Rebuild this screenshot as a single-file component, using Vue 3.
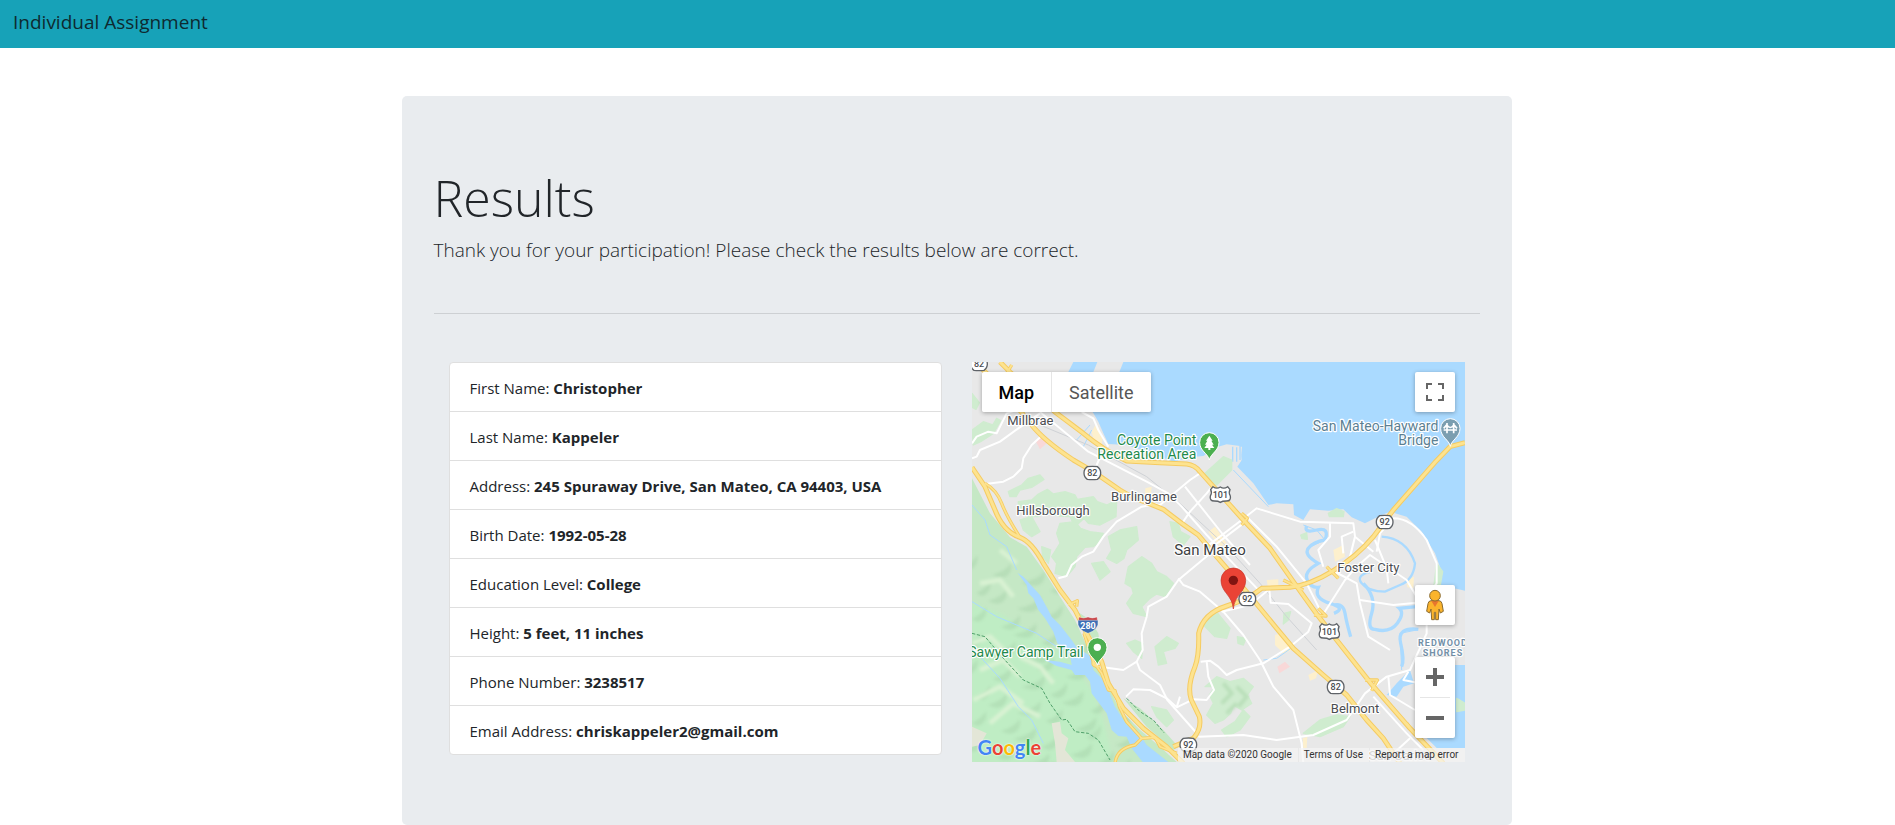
<script setup>
const details = [
  { label: 'First Name', value: 'Christopher' },
  { label: 'Last Name', value: 'Kappeler' },
  { label: 'Address', value: '245 Spuraway Drive, San Mateo, CA 94403, USA' },
  { label: 'Birth Date', value: '1992-05-28' },
  { label: 'Education Level', value: 'College' },
  { label: 'Height', value: '5 feet, 11 inches' },
  { label: 'Phone Number', value: '3238517' },
  { label: 'Email Address', value: 'chriskappeler2@gmail.com' },
]

const parks = [
  'M36 130L58 158L48 178L36 172Z',
  'M36 240L70 215L98 225L110 205L122 212L100 250L62 275L40 285Z',
  'M145 425L185 405L205 385L240 375L252 388L215 412L180 420L168 440L150 440Z',
  'M175 455L215 450L235 432L262 418L280 432L315 425L345 435L352 448L400 440L412 455L440 465L470 450L468 500L420 525L385 520L372 505L345 530L330 500L295 498L260 485L235 500L205 500L198 480L175 480Z',
  'M180 510L215 500L240 545L215 560L190 540Z',
  'M300 520L345 515L362 535L390 545L430 550L418 575L400 590L375 592L350 620L345 650L320 680L285 670L290 640L275 620L300 580L290 550Z',
  'M245 590L272 600L265 640L248 620Z',
  'M445 560L480 540L530 530L535 570L500 600L492 625L470 640L440 625L455 600Z',
  'M395 640L430 635L450 665L420 690Z',
  'M505 650L545 620L575 640L590 665L620 680L640 700L615 740L590 732L570 745L545 770L560 800L520 790L500 760L520 730L515 712L495 700Z',
  'M630 515L655 520L662 545L690 560L670 585L640 560Z',
  'M735 370L790 320L815 330L815 360L770 405L750 390Z',
  'M725 820L765 780L810 835L800 865L765 860Z',
  'M585 890L620 860L655 880L645 895L610 905L620 940L595 945Z',
  'M500 880L525 870L548 880L545 925L520 905Z',
  'M735 1010L770 980L810 995L850 985L880 1010L862 1035L875 1060L845 1080L820 1065L812 1090L790 1110L765 1120L740 1095L760 1060L748 1035L765 1010Z',
  'M785 1140L825 1115L850 1080L870 1100L840 1140L800 1160Z',
  'M1030 1150L1080 1110L1130 1095L1170 1100L1150 1130L1080 1160Z',
  'M1105 490L1130 476L1152 485L1150 500L1108 500Z',
  'M1022 555L1040 548L1042 568L1026 566Z',
  'M1430 640L1448 665L1440 710L1422 705Z',
  'M1490 1045L1515 1060L1515 1080L1490 1085Z',
  'M972 790L992 785L985 810L970 822Z',
  'M832 860L858 865L850 885L834 880Z',
  'M575 1070L620 1080L640 1110L620 1130L590 1100Z',
]

const builtUp = [
  'M745 545L765 530L800 580L780 590Z',
  'M945 855L965 850L995 900L970 910L945 885Z',
  'M1120 600L1150 585L1155 620L1125 635Z',
  'M920 690L955 688L955 720L925 720Z',
  'M1045 975L1075 960L1068 985L1050 992Z',
  'M1340 690L1362 680L1360 715L1342 712Z',
  'M1028 1165L1042 1160L1040 1194L1030 1194Z',
  'M556 415L575 410L572 440L555 435Z',
  'M395 245L410 220L428 262L425 285L400 265Z',
]

const majorRoads = [
  'M120 36L150 66L285 186L370 250Q430 300 500 333L600 338L680 342Q705 345 720 365L850 510L930 595L1000 695L1070 792L1130 870L1235 1003L1350 1135L1450 1240',
  'M60 50L130 120L215 225Q250 270 340 330L400 365L480 420Q520 445 560 458L610 478L665 520L715 555L770 620L820 678L880 750L950 835L1000 895L1090 975L1160 1035L1220 1110L1270 1165L1320 1240',
  'M1515 278L1470 290L1425 337L1300 480L1240 560Q1190 620 1120 662Q1050 705 990 712L905 715Q870 745 800 768Q730 790 716 850Q718 915 705 950Q680 1010 694 1050L718 1100Q726 1135 700 1165L640 1190',
  'M36 352L75 410L105 480Q130 545 180 562Q215 575 250 640L300 720L345 780L380 850L425 935L445 1000L490 1075L550 1135L620 1190L670 1240',
]

const rampRoads = [
  'M75 400Q110 420 125 460T180 562',
  'M372 850L400 935L425 970L445 1020L465 1022L478 1070L500 1115L545 1165L525 1185Q470 1195 465 1240',
  'M545 1165L585 1162L600 1190L650 1210',
  'M325 765L352 752L350 770',
  'M400 935Q395 950 420 950',
  'M140 70L155 45',
  'M845 490L862 505L845 525',
  'M1062 795L1098 798L1075 775',
  'M1215 990L1252 990L1235 1022',
  'M970 690L1030 720',
  'M1100 650L1135 685',
  'M1340 1120L1362 1150',
]

const minorRoads = [
  'M36 280L50 260L85 245L110 250L140 190L185 175',
  'M36 325L50 320L60 300L120 275L175 235L240 190',
  'M76 402L130 395L160 380L185 355L190 325L215 285L242 260',
  'M240 186L300 235L385 305L560 395L625 430L665 470L740 555L800 620L900 725',
  'M365 186L400 205L415 240L445 290',
  'M410 345L425 310L450 300',
  'M295 685L320 678L335 645L365 620L400 605L430 560L470 515L545 470L590 462',
  'M550 460L600 465L690 390L720 370',
  'M665 522L690 485L740 430L752 415',
  'M675 410L790 555L870 645',
  'M740 590L845 510L890 475L1020 515L1180 520L1185 560L1240 605',
  'M765 585L850 520',
  'M860 500L950 590L1040 700L1085 790',
  'M745 615L655 690L620 740L565 770L560 800L545 850L548 900L530 935L490 960L430 952',
  'M655 685L670 705L720 725L790 785L850 855L900 930L940 1010L1000 1080L1025 1180L1030 1240',
  'M785 785L870 765L925 720',
  'M928 720L932 758L985 762L1055 820L1045 845L990 890L910 940L830 960L800 975L775 950L750 932L722 935',
  'M740 935L745 980L762 1020L740 1050L700 1048L650 1072L620 1045L570 1020L520 1018L498 1040',
  'M530 935L540 960L600 1005L622 1050L715 1155',
  'M650 1072L660 1040',
  'M715 1160L850 1155L950 1170L1060 1155L1160 1110L1215 1030L1280 980L1350 960L1400 850L1400 820',
  'M1085 800L1155 690L1190 650L1230 615L1340 690L1370 740',
  'M1115 660L1190 700L1200 760L1225 860L1290 900',
  'M1090 650L1075 600L1110 560L1110 520',
  'M1150 610L1145 560L1180 545',
  'M1185 560L1170 620',
  'M1250 605L1260 550L1300 505Q1355 505 1400 570L1430 640L1430 700L1400 740',
  'M1200 750L1300 765L1370 758',
  'M1245 570L1280 655L1285 700',
  'M1285 980L1290 1035L1365 1080',
  'M1240 1040L1340 1150L1390 1200',
  'M1345 965L1330 990L1380 1000',
  'M1290 1220L1350 1165',
]

const creeks = [
  'M36 465L75 510L90 555L140 590L170 660',
  'M36 755L110 800L170 825L230 850L290 890',
  'M60 920L120 985L175 1070L215 1110L250 1180',
  'M820 360L925 470',
  'M910 930L950 925L1000 890',
  'M1030 525L1070 540L1095 570L1040 595',
  'M1370 840L1320 850L1325 960',
  'M1290 1025L1350 975',
  'M350 270L390 225M370 290L395 240',
]

const places = [
  { name: 'Millbrae', x: 211, y: 224 },
  { name: 'Burlingame', x: 552, y: 452 },
  { name: 'Hillsborough', x: 279, y: 494 },
  { name: 'Foster City', x: 1225, y: 665 },
  { name: 'Belmont', x: 1185, y: 1088 },
]

const stateRoutes = [
  { no: '82', x: 57, y: 42 },
  { no: '82', x: 397, y: 369 },
  { no: '92', x: 1274, y: 516 },
  { no: '92', x: 862, y: 747 },
  { no: '82', x: 1127, y: 1011 },
  { no: '92', x: 685, y: 1184 },
]

const usRoutes = [
  { no: '101', x: 781, y: 434 },
  { no: '101', x: 1108, y: 845 },
]

const ridges = []
for (let row = 0; row < 8; row++) {
  for (let col = 0; col < 7; col++) {
    const x = 10 + col * 74 + ((row * 3 + col) % 4) * 13
    const y = 650 + row * 78 + col * 24
    const reach = 24 + ((row * 5 + col * 7) % 5) * 7
    ridges.push(`M${x} ${y}q${reach} -8 ${reach + 18} -34q4 20 -8 34q-16 18 ${-reach - 10} 0z`)
  }
}
</script>

<template>
  <header class="navbar">
    <a class="brand" href="#">Individual Assignment</a>
  </header>

  <main class="container">
    <section class="jumbotron">
      <h1>Results</h1>
      <p class="lead">Thank you for your participation! Please check the results below are correct.</p>
      <hr />
      <div class="row">
        <ul class="details">
          <li v-for="item in details" :key="item.label">
            {{ item.label }}: <strong>{{ item.value }}</strong>
          </li>
        </ul>

        <div class="map">
          <svg class="tiles" viewBox="36 36 1479 1200" preserveAspectRatio="xMidYMid slice" role="img" aria-label="Map of San Mateo">
            <defs>
              <clipPath id="hills">
                <path d="M36 385L90 490L150 562L200 590L250 660L300 740L345 810L400 930L440 1000L480 1080L540 1140L600 1190L650 1236H36Z" />
              </clipPath>
              <filter id="soft"><feGaussianBlur stdDeviation="5" /></filter>
            </defs>

            <rect x="-400" y="-400" width="2400" height="2100" fill="#e8e8e8" />
            <path class="water" d="M340 36L325 66L400 66L412 36ZM490 36L478 66L400 160L398 186L415 215L430 250L445 282L500 285L560 305L640 335L690 322L730 318L775 290L800 283L840 288L845 330L832 350L880 400L925 465L950 460L1000 463L1002 495L1030 510L1050 478L1105 482L1150 478L1175 502L1215 520L1260 497L1290 485L1340 500L1385 545L1425 610L1445 665L1440 705L1515 722L2000 722V-400H490Z" />
            <path class="water" d="M1515 945L1480 945L1440 1000L1400 1164L1430 1194L1515 1194L2000 1194V945Z" />
            <path fill="#aadaff" d="M1280 1035L1310 1000L1350 960L1362 1000L1330 1010L1310 1040Z" />
            <path fill="#e8e8e8" d="M815 290L822 335H842L846 290Z" />
            <path class="pier" d="M818 290V335M830 292V335M840 288V330" />

            <path fill="#c5e8c5" d="M36 385L90 490L150 562L200 590L250 660L300 740L345 810L400 930L440 1000L480 1080L540 1140L600 1190L650 1236H36Z" />
            <path fill="#c5e8c5" d="M345 780L390 810L415 850L425 920L400 870ZM490 1045L540 1075L610 1140L655 1190L640 1200L560 1130Z" />
            <g clip-path="url(#hills)">
              <path fill="#bfedc4" filter="url(#soft)" d="M36 760L120 790L220 850L330 930L400 1030L430 1110L460 1236H36Z" />
              <path v-for="d in ridges" :key="d" class="ridge" :d="d" filter="url(#soft)" />
              <path class="ridge-light" filter="url(#soft)" d="M36 880L90 860L130 900M60 960L130 930L180 980M40 1050L120 1010L190 1060M90 1120L160 1060L240 1100M180 920L240 950L280 1000M60 700L120 690L160 740M120 600L170 640" />
              <path fill="#e3e6d7" d="M275 1120L300 1115L305 1150L325 1165L315 1200L345 1236H290L285 1180Z" />
              <path fill="#e3e6d7" d="M36 1130L80 1150L60 1185L36 1190Z" />
            </g>
            <path v-for="d in parks" :key="d" class="park" :d="d" />
            <path class="park-relief" filter="url(#soft)" d="M790 1000L815 1030L785 1060M830 1010L860 1040L835 1070M800 1090L830 1060" />
            <path v-for="d in builtUp" :key="d" class="built" :d="d" />
            <path fill="#f9d8d8" d="M228 275L245 262L260 280L240 298ZM952 950L975 935L990 950L958 970Z" />

            <path class="creek wide" d="M1040 528Q1030 550 1070 540T1095 570Q1060 575 1045 595T1075 640Q1030 665 1042 690T1075 712Q1060 745 1110 760T1122 790" />
            <path class="creek wide" d="M1125 765Q1150 760 1155 790T1172 860" />
            <path class="creek lagoon" d="M1265 560Q1340 565 1365 640Q1360 690 1320 705L1275 725Q1225 725 1205 700T1235 665" />
            <path class="creek wide" d="M1210 700Q1250 740 1235 790T1245 838Q1290 850 1312 820T1318 775L1370 770" />
            <path class="creek wide" d="M1375 838Q1310 830 1322 880T1325 950" />
            <path v-for="d in creeks" :key="d" class="creek" :d="d" />
            <path fill="#aadaff" d="M172 668L190 680L240 735L262 775L275 800L300 825L335 870L352 895L395 920L400 960L425 985L445 1020L465 1070L500 1125L530 1140L560 1185L625 1236H548L515 1195L500 1160L475 1158L455 1140L440 1090L410 1050L395 1030L390 995L375 975L345 975L335 960L290 948L255 930L300 935L335 945L330 915L292 880L280 845L255 805L235 780L220 745L205 730L200 705Z" />
            <path class="trail" d="M36 850L75 860L130 925L190 990L245 1015L270 1060L305 1110L320 1108L345 1145L385 1150L415 1170L450 1230M500 1045L540 1085L580 1110L612 1148" />
            <path class="rail" d="M240 225L385 285L560 380L665 465L800 590L900 700L980 800L1070 900" />

            <path v-for="d in minorRoads" :key="d" class="minor" :d="d" />
            <path v-for="d in rampRoads" :key="'rc' + d" class="ramp-casing" :d="d" />
            <path v-for="d in majorRoads" :key="'mc' + d" class="major-casing" :d="d" />
            <path v-for="d in rampRoads" :key="'rf' + d" class="ramp" :d="d" />
            <path v-for="d in majorRoads" :key="'mf' + d" class="major" :d="d" />

            <g v-for="r in stateRoutes" :key="r.no + r.x" class="shield" :transform="`translate(${r.x} ${r.y})`">
              <path d="M-15 -19Q0 -21 15 -19Q25 -12 25 0T15 19Q0 21 -15 19Q-25 12 -25 0T-15 -19Z" />
              <text y="10">{{ r.no }}</text>
            </g>
            <g v-for="r in usRoutes" :key="r.no + r.x" class="shield" :transform="`translate(${r.x} ${r.y})`">
              <path d="M-22 -24Q-11 -16 0 -23Q11 -16 22 -24L29 -15Q24 -6 30 4Q33 19 18 19Q6 19 0 23Q-6 19 -18 19Q-33 19 -30 4Q-24 -6 -29 -15Z" />
              <text y="10">{{ r.no }}</text>
            </g>
            <g class="interstate" transform="translate(384 825)">
              <path fill="#c8474b" d="M-27 -24Q-13 -18 0 -24Q13 -18 27 -24L29 -11H-29Z" />
              <path fill="#3d6fb5" d="M-30 -14H30Q34 14 0 25Q-34 14 -30 -14Z" />
              <text y="11">280</text>
            </g>

            <g class="labels">
              <text v-for="p in places" :key="p.name" :x="p.x" :y="p.y">{{ p.name }}</text>
              <text class="city" x="750" y="616">San Mateo</text>
              <text class="green end" x="709" y="285">Coyote Point</text>
              <text class="green end" x="709" y="327">Recreation Area</text>
              <text class="green end" x="371" y="921">Sawyer Camp Trail</text>
              <text class="slate end" x="1435" y="242">San Mateo-Hayward</text>
              <text class="slate end" x="1435" y="284">Bridge</text>
              <text class="district" x="1449" y="888">REDWOOD</text>
              <text class="district" x="1449" y="918">SHORES</text>
              <text class="faded" x="1320" y="1230">San Carlos</text>
            </g>

            <g transform="translate(748 330)">
              <path class="pin-edge" fill="#4caf50" d="M0 0C-4 -20 -29 -27 -29 -53A29 29 0 0 1 29 -53C29 -27 4 -20 0 0Z" />
              <path fill="#fff" d="M0 -73L10 -58H6L13 -46H8L15 -36H3V-30H-3V-36H-15L-8 -46H-13L-6 -58H-10Z" />
            </g>
            <g transform="translate(412 946)">
              <path class="pin-edge" fill="#4caf50" d="M0 0C-4 -20 -29 -27 -29 -54A29 29 0 0 1 29 -54C29 -27 4 -20 0 0Z" />
              <circle cy="-54" r="11" fill="#fff" />
            </g>
            <g transform="translate(1471 289)">
              <path class="pin-edge" fill="#7b9eb0" d="M0 0C-4 -20 -29 -27 -29 -54A29 29 0 0 1 29 -54C29 -27 4 -20 0 0Z" />
              <path class="bridge" d="M-20 -49H20M-10 -70V-39M10 -70V-39M-10 -63Q0 -50 10 -63M-20 -54L-10 -65M20 -54L10 -65" />
            </g>
            <g transform="translate(820 777)">
              <path fill="#ea4335" stroke="#c5352b" stroke-width="2" d="M0 0C-3 -42 -37 -50 -37 -86A37 37 0 0 1 37 -86C37 -50 3 -42 0 0Z" />
              <circle cy="-86" r="14" fill="#811411" />
            </g>
          </svg>

          <div class="map-type">
            <button type="button" class="active">Map</button>
            <button type="button">Satellite</button>
          </div>

          <button type="button" class="control fullscreen" aria-label="Toggle fullscreen view">
            <svg width="18" height="18" viewBox="0 0 18 18"><path fill="#666" d="M0 0V6H2V2H6V0ZM12 0V2H16V6H18V0ZM16 12V16H12V18H18V12ZM2 12H0V18H6V16H2Z" /></svg>
          </button>

          <div class="side-controls">
            <button type="button" class="control" aria-label="Show Street View">
              <svg width="20" height="32" viewBox="0 0 60 96">
                <path fill="#fbb42c" stroke="#8a6a2e" stroke-width="3" stroke-linejoin="round" d="M18 35H42Q50 36 51 44L55 67L46 72L42 60L40 92H32V70H28V92H20L18 60L14 72L5 67L9 44Q10 36 18 35Z" />
                <path fill="#e8762d" d="M19 36H41L30 54Z" />
                <circle cx="30" cy="20" r="16" fill="#fbb42c" stroke="#8a6a2e" stroke-width="3" />
              </svg>
            </button>
            <div class="zoom">
              <button type="button" aria-label="Zoom in">
                <svg width="18" height="18" viewBox="0 0 18 18"><path fill="#666" d="M7 0H11V7H18V11H11V18H7V11H0V7H7Z" /></svg>
              </button>
              <button type="button" aria-label="Zoom out">
                <svg width="18" height="18" viewBox="0 0 18 18"><path fill="#666" d="M0 7H18V11H0Z" /></svg>
              </button>
            </div>
          </div>

          <a class="logo" href="#" aria-label="Google"><span class="b">G</span><span class="r">o</span><span class="y">o</span><span class="b">g</span><span class="g">l</span><span class="r">e</span></a>

          <div class="credits">
            <span>Map data ©2020 Google</span>
            <a href="#">Terms of Use</a>
            <a href="#">Report a map error</a>
          </div>
        </div>
      </div>
    </section>
  </main>
</template>

<style>
body {
  margin: 0;
  background: #fff;
}
</style>

<style scoped>
* {
  box-sizing: border-box;
}
.navbar,
.container {
  font-family: "Open Sans", "Noto Sans", sans-serif;
  color: #212529;
}
.navbar {
  display: flex;
  align-items: center;
  height: 48px;
  padding: 0 13px 4px;
  background: #17a2b8;
}
.brand {
  font-size: 19px;
  line-height: 30px;
  color: #0e2a30;
  text-decoration: none;
}
.container {
  max-width: 1128px;
  margin: 48px auto 0;
  padding-left: 18px;
}
.jumbotron {
  padding: 64px 32px 63px;
  border-radius: 5px;
  background: #e9ecef;
}
h1 {
  margin: 0;
  padding-top: 4px;
  font-size: 50px;
  font-weight: 300;
  line-height: 68px;
}
.lead {
  margin: 0;
  padding-top: 4px;
  font-size: 19px;
  font-weight: 300;
  line-height: 29px;
}
hr {
  margin: 48px 0;
  border: 0;
  border-top: 1px solid #cdd0d3;
}
.row {
  display: grid;
  grid-template-columns: 1fr 1fr;
  gap: 30px;
  align-items: start;
  padding: 0 15px;
}
.details {
  margin: 0;
  padding: 0;
  list-style: none;
  border: 1px solid #dfdfdf;
  border-radius: 4px;
  background: #fff;
  font-size: 15px;
  line-height: 24px;
}
.details li {
  padding: 13px 20px 11px;
}
.details li + li {
  border-top: 1px solid #dfdfdf;
}
.details strong {
  font-weight: 700;
}

.map {
  position: relative;
  height: 400px;
  overflow: hidden;
  font-family: Roboto, sans-serif;
}
.tiles {
  display: block;
  width: 100%;
  height: 100%;
}
.water {
  fill: #aadaff;
}
.park {
  fill: #cfeccf;
  stroke: #cfeccf;
  stroke-width: 4;
  stroke-linejoin: round;
}
.park-relief {
  fill: none;
  stroke: #b9dfb9;
  stroke-width: 12;
}
.built {
  fill: #fdf0cd;
}
.ridge {
  fill: #a3cfa6;
  opacity: 0.4;
}
.ridge-light {
  fill: none;
  stroke: #d9f2d3;
  stroke-width: 14;
}
.pier,
.creek {
  fill: none;
  stroke: #aadaff;
  stroke-width: 4;
}
.creek {
  stroke-width: 3;
}
.creek.wide {
  stroke-width: 10;
}
.creek.lagoon {
  stroke-width: 7;
}
.trail {
  fill: none;
  stroke: #4fa06a;
  stroke-width: 3;
  stroke-dasharray: 10 5;
}
.rail {
  fill: none;
  stroke: #cfd2d6;
  stroke-width: 3;
}
.minor,
.ramp,
.ramp-casing,
.major,
.major-casing {
  fill: none;
  stroke-linejoin: round;
}
.minor {
  stroke: #fff;
  stroke-width: 6;
}
.major-casing {
  stroke: #f5cb62;
  stroke-width: 15;
}
.major {
  stroke: #fde38f;
  stroke-width: 9;
}
.ramp-casing {
  stroke: #f5cb62;
  stroke-width: 10;
}
.ramp {
  stroke: #fde38f;
  stroke-width: 5;
}
.shield path {
  fill: #fff;
  stroke: #5f6368;
  stroke-width: 4;
}
.shield text,
.interstate text {
  font-size: 27px;
  font-weight: 500;
  text-anchor: middle;
  fill: #4a4d51;
}
.interstate path {
  stroke: #fff;
  stroke-width: 1;
}
.interstate text {
  font-weight: 700;
  fill: #fff;
}
.labels text {
  font-size: 39px;
  text-anchor: middle;
  fill: #4b4d52;
  stroke: #fff;
  stroke-width: 7;
  stroke-linejoin: round;
  paint-order: stroke;
}
.labels .city {
  font-size: 45px;
  fill: #3c3e42;
}
.labels .end {
  font-size: 42px;
  text-anchor: end;
}
.labels .green {
  fill: #1f8a4c;
}
.labels .slate {
  fill: #5b7f93;
}
.labels .district {
  font-size: 27px;
  font-weight: 700;
  letter-spacing: 3px;
  fill: #7390a8;
}
.labels .faded {
  fill: #8f9296;
}
.pin-edge {
  stroke: #fff;
  stroke-width: 3;
}
.bridge {
  fill: none;
  stroke: #fff;
  stroke-width: 5;
}

button {
  display: flex;
  align-items: center;
  justify-content: center;
  padding: 0;
  border: 0;
  background: #fff;
  font-family: inherit;
}
.map-type {
  position: absolute;
  top: 10px;
  left: 10px;
  display: flex;
  height: 40px;
  border-radius: 2px;
  overflow: hidden;
  box-shadow: 0 1px 4px rgba(0, 0, 0, 0.3);
}
.map-type button {
  padding: 0 17px;
  font-size: 18px;
  color: #565656;
}
.map-type .active {
  font-weight: 500;
  color: #000;
  border-right: 1px solid #e6e6e6;
}
.control,
.zoom {
  width: 40px;
  border-radius: 2px;
  background: #fff;
  box-shadow: 0 1px 4px rgba(0, 0, 0, 0.3);
}
.control {
  height: 40px;
}
.fullscreen {
  position: absolute;
  top: 10px;
  right: 10px;
}
.side-controls {
  position: absolute;
  right: 10px;
  bottom: 24px;
  display: grid;
  gap: 32px;
}
.zoom button {
  width: 30px;
  height: 40px;
  margin: 0 5px;
}
.zoom button + button {
  height: 41px;
  border-top: 1px solid #e6e6e6;
}
.logo {
  position: absolute;
  left: 6px;
  bottom: 3px;
  font-family: Lato, sans-serif;
  font-size: 20px;
  font-weight: 700;
  line-height: 24px;
  text-decoration: none;
  text-shadow: 0 0 1px #fff, 0 0 2px #fff;
}
.b { color: #4285f4; }
.r { color: #ea4335; }
.y { color: #fbbc05; }
.g { color: #34a853; }
.credits {
  position: absolute;
  right: 0;
  bottom: 0;
  display: flex;
  gap: 1px;
  font-size: 10px;
  line-height: 14px;
  white-space: nowrap;
}
.credits > * {
  padding: 0 6px 0 5px;
  background: rgba(245, 245, 245, 0.7);
  color: #333;
  text-decoration: none;
}
</style>
